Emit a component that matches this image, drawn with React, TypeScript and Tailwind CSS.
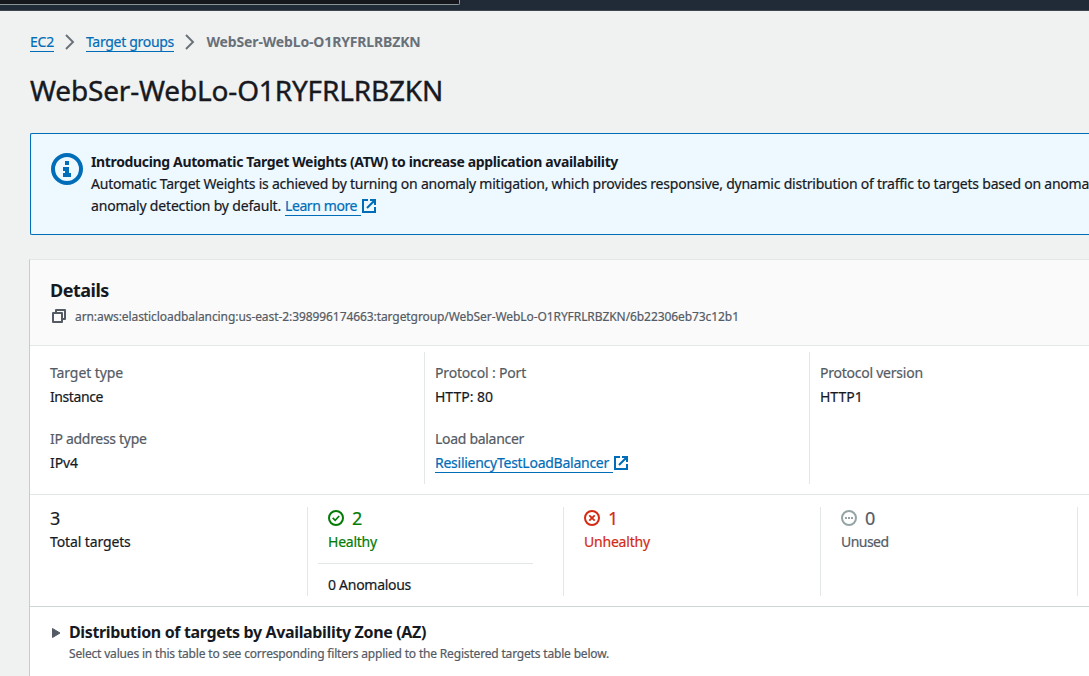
import type { ReactNode } from "react";

function Chevron({ className }: { className: string }) {
  return (
    <svg className={className} width="10" height="16" viewBox="0 0 10 16" fill="none" stroke="#687078" strokeWidth="1.9">
      <path d="M1 1l7 7-7 7" />
    </svg>
  );
}

function ExternalIcon({ className }: { className: string }) {
  return (
    <svg className={className} width="14" height="14" viewBox="0 0 14 14" fill="none" stroke="#006db8" strokeWidth="2">
      <path d="M6 1H1v12h12V8M8 1h5v5M13 1L5 9" />
    </svg>
  );
}

function InfoIcon() {
  return (
    <svg className="shrink-0" width="32" height="32" viewBox="0 0 32 32">
      <circle cx="16" cy="16" r="14" fill="none" stroke="#006db8" strokeWidth="4" />
      <path d="M14 8h4v4h-4zM12 14h6v6h2v4h-8v-4h2v-2h-2z" fill="#006db8" />
    </svg>
  );
}

function CopyIcon() {
  return (
    <svg className="shrink-0" width="14" height="14" viewBox="0 0 14 14" fill="none" stroke="#545b64" strokeWidth="2">
      <path d="M4 3.5V1h9v9h-2.500M1 4h9v9H1z" strokeLinejoin="round" />
    </svg>
  );
}

function StatusIcon({ kind }: { kind: "ok" | "bad" | "none" }) {
  return (
    <svg className="shrink-0" width="16" height="16" viewBox="0 0 16 16" fill="none" stroke="currentColor" strokeWidth="2">
      <circle cx="8" cy="8" r="7" />
      {kind === "ok" && <path d="M4.700 7.800l2.500 2.500 4-4.300" strokeWidth="1.700" />}
      {kind === "bad" && <path d="M5.300 5.300l5.400 5.400M10.700 5.300l-5.400 5.400" strokeWidth="1.800" />}
      {kind === "none" && <path d="M4 8h2M7 8h2M10 8h2" />}
    </svg>
  );
}

function Field({ label, children }: { label: ReactNode; children: ReactNode }) {
  return (
    <div className="flex flex-col gap-0.5">
      <div className="h-[22px] text-[#545b64]">{label}</div>
      <div className="flex h-[22px]">{children}</div>
    </div>
  );
}

export default function App() {
  return (
    <div className="flex h-[676px] w-[1089px] flex-col overflow-hidden whitespace-nowrap bg-[#f0f1f1] font-['Noto_Sans',sans-serif] text-[14px] leading-[22px] text-[#16191f] [-webkit-text-stroke:0.2px]">
      <header className="h-[11px] shrink-0 border-b border-[#414750] bg-[#212b37]">
        <div className="h-[5px] w-[460px] rounded-br-[2px] border-b border-r border-[#879596] bg-[#16171d]" />
      </header>

      <nav className="mt-5 flex h-[22px] shrink-0 pl-[30px]">
        <a className="h-[21px] w-[24px] border-b border-[#006db8] text-[#006db8] tracking-[-0.21px]">EC2</a>
        <Chevron className="ml-[11px] mt-[3px]" />
        <a className="ml-[11px] h-[21px] w-[88px] border-b border-[#006db8] text-[#006db8] tracking-[-0.3px]">Target groups</a>
        <Chevron className="ml-[11px] mt-[3px]" />
        <span className="ml-[11.500px] font-bold text-[#687078] tracking-[-0.15px] [-webkit-text-stroke:0]">WebSer-WebLo-O1RYFRLRBZKN</span>
      </nav>

      <h1 className="mt-[19px] h-9 shrink-0 pl-[30px] text-[28px] leading-9 tracking-[-0.17px] [-webkit-text-stroke:0.4px]">WebSer-WebLo-O1RYFRLRBZKN</h1>

      <section className="ml-[30px] mt-[25px] flex h-[102px] shrink-0 gap-2 rounded-l-[2px] border border-r-0 border-[#006db8] bg-[#edf8ff] pl-5 pt-[17px]">
        <div className="pt-[2px]"><InfoIcon /></div>
        <div>
          <div className="font-bold tracking-[-0.353px] [-webkit-text-stroke:0]">Introducing Automatic Target Weights (ATW) to increase application availability</div>
          <div className="tracking-[-0.229px]">Automatic Target Weights is achieved by turning on anomaly mitigation, which provides responsive, dynamic distribution of traffic to targets based on anoma</div>
          <div className="flex">
            <span className="w-[194px] tracking-[-0.18px]">anomaly detection by default.</span>
            <a className="h-[21px] w-[76px] border-b border-[#006db8] text-[#006db8] tracking-[-0.41px]">Learn more</a>
            <ExternalIcon className="ml-[1px] mt-1" />
          </div>
        </div>
      </section>

      <section className="ml-[29px] mt-6 flex grow flex-col border-l border-t border-l-[#c8cccc] border-t-[#e3e7e7] bg-white">
        <div className="flex h-[86px] shrink-0 flex-col border-b border-[#e4e7e8] bg-[#fafafa] pl-5 pt-[19px]">
          <h2 className="h-[22px] text-[18px] font-bold tracking-[-0.5px] [-webkit-text-stroke:0]">Details</h2>
          <div className="mt-2 flex h-4 pl-[2px] text-[12px] leading-4 text-[#545b64]">
            <CopyIcon />
            <span className="ml-[9px] tracking-[-0.079px]">arn:aws:elasticloadbalancing:us-east-2:398996174663:targetgroup/WebSer-WebLo-O1RYFRLRBZKN/6b22306eb73c12b1</span>
          </div>
        </div>

        <div className="flex h-[149px] shrink-0 border-b border-[#e4e7e8] pb-[10px] pt-[6px]">
          <div className="flex w-[394px] shrink-0 flex-col gap-5 pl-5 pt-[10px]">
            <Field label={<span className="tracking-[-0.097px]">Target type</span>}><span className="tracking-[-0.41px]">Instance</span></Field>
            <Field label={<span className="tracking-[-0.3px]">IP address type</span>}><span className="tracking-[-0.086px]">IPv4</span></Field>
          </div>
          <div className="flex w-[385px] shrink-0 flex-col gap-5 border-l border-[#e4e7e8] pl-[10px] pt-[10px]">
            <Field label={<span className="tracking-[-0.17px]">Protocol : Port</span>}><span>HTTP: 80</span></Field>
            <Field label={<span className="tracking-[-0.3px]">Load balancer</span>}>
              <a className="h-[21px] w-[178px] border-b border-[#006db8] text-[#006db8] tracking-[-0.26px]">ResiliencyTestLoadBalancer</a>
              <ExternalIcon className="ml-[1px] mt-1" />
            </Field>
          </div>
          <div className="grow border-l border-[#e4e7e8] pl-[10px] pt-[10px]">
            <Field label={<span className="tracking-[-0.24px]">Protocol version</span>}><span>HTTP1</span></Field>
          </div>
        </div>

        <div className="flex h-[112px] shrink-0 border-b border-[#d0d7d7] pb-[10px] pt-3">
          <div className="w-[277px] shrink-0 pl-5">
            <div className="text-[18px]">3</div>
            <div className="mt-0.5 tracking-[-0.12px]">Total targets</div>
          </div>
          <div className="w-[256px] shrink-0 border-l border-[#e4e7e8] pl-[10px] text-[#037c06]">
            <div className="flex pl-[10px] text-[18px]">
              <div className="pt-[3px]"><StatusIcon kind="ok" /></div>
              <span className="ml-2">2</span>
            </div>
            <div className="mt-0.5 pl-[10px] tracking-[-0.24px]">Healthy</div>
            <div className="mt-[10px] w-[215px] border-t border-[#e4e7e8] pl-[10px] pt-[10px] text-[#16191f] tracking-[-0.28px]">0 Anomalous</div>
          </div>
          <div className="w-[257px] shrink-0 border-l border-[#e4e7e8] pl-5 text-[#d42a14]">
            <div className="flex text-[18px]">
              <div className="pt-[3px]"><StatusIcon kind="bad" /></div>
              <span className="ml-2">1</span>
            </div>
            <div className="mt-0.5 tracking-[-0.21px]">Unhealthy</div>
          </div>
          <div className="w-[257px] shrink-0 border-l border-[#e4e7e8] pl-5 text-[#545b64]">
            <div className="flex text-[18px]">
              <div className="pt-[3px] text-[#95a5a6]"><StatusIcon kind="none" /></div>
              <span className="ml-2">0</span>
            </div>
            <div className="mt-0.5 tracking-[-0.55px]">Unused</div>
          </div>
          <div className="grow border-l border-[#e4e7e8]" />
        </div>

        <div className="flex pl-[22px] pt-[14px]">
          <svg className="mt-[7px] shrink-0" width="9" height="10" viewBox="0 0 9 10">
            <path d="M.5.500L8 5 .5 9.500z" fill="#545b64" stroke="#545b64" strokeLinejoin="round" />
          </svg>
          <div className="ml-2">
            <h3 className="h-[22px] text-[16px] font-bold tracking-[-0.35px] [-webkit-text-stroke:0]">Distribution of targets by Availability Zone (AZ)</h3>
            <p className="mt-[3px] text-[12px] leading-4 text-[#545b64] tracking-[-0.176px]">Select values in this table to see corresponding filters applied to the Registered targets table below.</p>
          </div>
        </div>
      </section>
    </div>
  );
}
